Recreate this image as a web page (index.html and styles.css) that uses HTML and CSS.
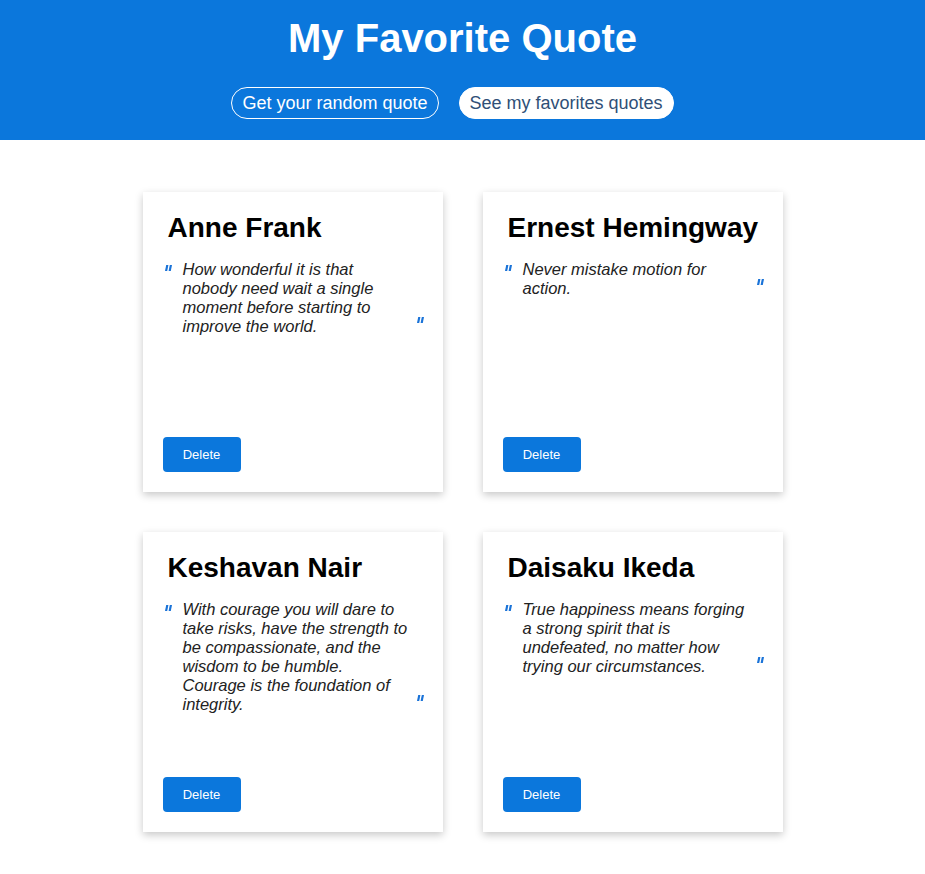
FILE: index.html
```html
<!DOCTYPE html>
<html lang="en">
<head>
<meta charset="utf-8">
<title>My Favorite Quote</title>
<link rel="stylesheet" href="styles.css">
</head>
<body>
<header class="header">
  <h1 class="title">My Favorite Quote</h1>
  <nav class="nav">
    <button class="nav-btn nav-btn--outline">Get your random quote</button>
    <button class="nav-btn nav-btn--solid">See my favorites quotes</button>
  </nav>
</header>
<main class="grid">
  <article class="card">
    <h2 class="card-name">Anne Frank</h2>
    <div class="quote">
      <svg class="qmark" viewBox="0 0 7 6"><polygon points="1.2,0 3.4,0 2.2,6 0,6"/><polygon points="4.8,0 7,0 5.8,6 3.6,6"/></svg>
      <p class="quote-text">How wonderful it is that nobody need wait a single moment before starting to improve the world.</p>
      <svg class="qmark qmark--end" viewBox="0 0 7 6"><polygon points="1.2,0 3.4,0 2.2,6 0,6"/><polygon points="4.8,0 7,0 5.8,6 3.6,6"/></svg>
    </div>
    <button class="delete-btn">Delete</button>
  </article>
  <article class="card">
    <h2 class="card-name">Ernest Hemingway</h2>
    <div class="quote">
      <svg class="qmark" viewBox="0 0 7 6"><polygon points="1.2,0 3.4,0 2.2,6 0,6"/><polygon points="4.8,0 7,0 5.8,6 3.6,6"/></svg>
      <p class="quote-text">Never mistake motion for action.</p>
      <svg class="qmark qmark--end" viewBox="0 0 7 6"><polygon points="1.2,0 3.4,0 2.2,6 0,6"/><polygon points="4.8,0 7,0 5.8,6 3.6,6"/></svg>
    </div>
    <button class="delete-btn">Delete</button>
  </article>
  <article class="card">
    <h2 class="card-name">Keshavan Nair</h2>
    <div class="quote">
      <svg class="qmark" viewBox="0 0 7 6"><polygon points="1.2,0 3.4,0 2.2,6 0,6"/><polygon points="4.8,0 7,0 5.8,6 3.6,6"/></svg>
      <p class="quote-text">With courage you will dare to take risks, have the strength to be compassionate, and the wisdom to be humble. Courage is the foundation of integrity.</p>
      <svg class="qmark qmark--end" viewBox="0 0 7 6"><polygon points="1.2,0 3.4,0 2.2,6 0,6"/><polygon points="4.8,0 7,0 5.8,6 3.6,6"/></svg>
    </div>
    <button class="delete-btn">Delete</button>
  </article>
  <article class="card">
    <h2 class="card-name">Daisaku Ikeda</h2>
    <div class="quote">
      <svg class="qmark" viewBox="0 0 7 6"><polygon points="1.2,0 3.4,0 2.2,6 0,6"/><polygon points="4.8,0 7,0 5.8,6 3.6,6"/></svg>
      <p class="quote-text">True happiness means forging a strong spirit that is undefeated, no matter how trying our circumstances.</p>
      <svg class="qmark qmark--end" viewBox="0 0 7 6"><polygon points="1.2,0 3.4,0 2.2,6 0,6"/><polygon points="4.8,0 7,0 5.8,6 3.6,6"/></svg>
    </div>
    <button class="delete-btn">Delete</button>
  </article>
</main>
</body>
</html>
```
FILE: styles.css
```css
* { box-sizing: border-box; }
html, body { margin: 0; padding: 0; }
body {
  font-family: "Liberation Sans", Arial, sans-serif;
  background: #fff;
  color: #000;
}
.header {
  background: #0b77dc;
  height: 140px;
  padding-top: 15px;
  text-align: center;
}
.title {
  margin: 0;
  font-size: 40px;
  line-height: 46px;
  font-weight: bold;
  color: #fff;
}
.nav {
  display: flex;
  justify-content: center;
  margin-top: 26px;
}
.nav-btn {
  font-family: "Liberation Sans", Arial, sans-serif;
  font-size: 18px;
  height: 32px;
  padding: 0 10px;
  margin-right: 20px;
  border-radius: 16px;
  cursor: pointer;
}
.nav-btn--outline {
  background: transparent;
  border: 1px solid #fff;
  color: #fff;
}
.nav-btn--solid {
  background: #fff;
  border: 1px solid #fff;
  color: #2f4f77;
}
.grid {
  display: grid;
  grid-template-columns: 300px 300px;
  gap: 40px;
  justify-content: center;
  padding: 52px 0 40px;
}
.card {
  height: 300px;
  background: #fff;
  box-shadow: 0 3px 8px rgba(0, 0, 0, 0.22);
  padding: 20px 19px 20px 20px;
  display: flex;
  flex-direction: column;
}
.card-name {
  margin: 0 0 0 5px;
  font-size: 28px;
  line-height: 32px;
  font-weight: bold;
}
.quote {
  display: flex;
  align-items: flex-start;
  margin-top: 16px;
}
.qmark {
  width: 7px;
  height: 6px;
  fill: #1a73d8;
  flex: none;
  margin: 5px 11px 0 2px;
}
.qmark--end {
  align-self: flex-end;
  margin: 0 0 13px auto;
}
.quote-text {
  margin: 0;
  flex: none;
  width: 226px;
  font-size: 16.5px;
  line-height: 19px;
  font-style: italic;
  color: #222;
}
.delete-btn {
  margin-top: auto;
  align-self: flex-start;
  width: 78px;
  height: 35px;
  border: none;
  border-radius: 4px;
  background: #0b77dc;
  color: #fff;
  font-family: "Liberation Sans", Arial, sans-serif;
  font-size: 13px;
  cursor: pointer;
}
```
